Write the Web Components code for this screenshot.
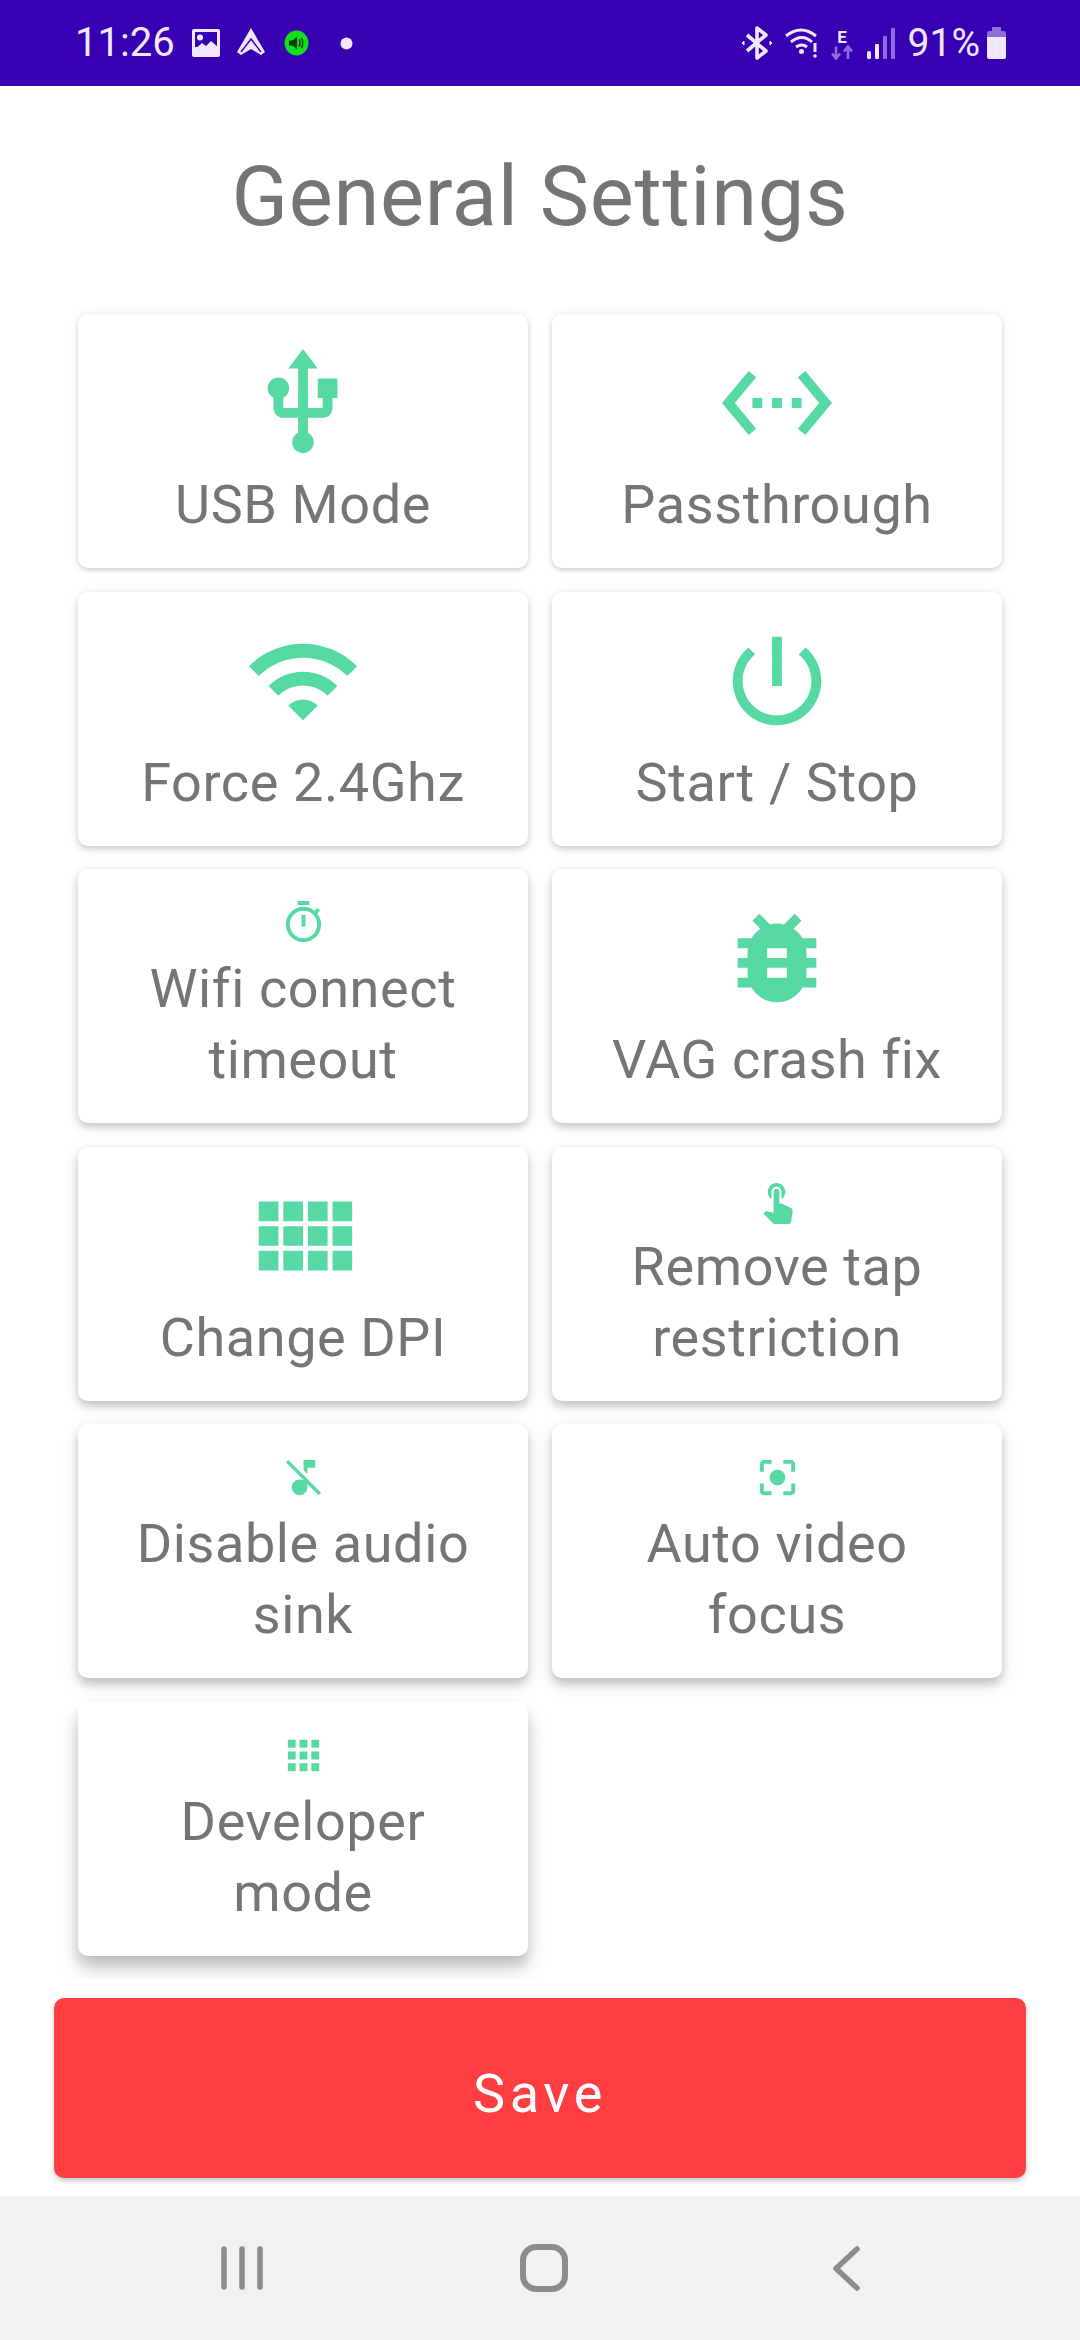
<!DOCTYPE html>
<html><head><meta charset="utf-8"><style>
html,body{margin:0;padding:0;background:#fff}
body{font-family:Roboto,"Noto Sans",sans-serif}
</style></head><body>
<settings-app>
<status-bar slot="status"></status-bar>
<page-title slot="title">General Settings</page-title>
<setting-card icon="usb" slot="cards" level="0">USB Mode</setting-card>
<setting-card icon="ethernet" slot="cards" level="0">Passthrough</setting-card>
<setting-card icon="wifi" slot="cards" level="1">Force 2.4Ghz</setting-card>
<setting-card icon="power" slot="cards" level="1">Start / Stop</setting-card>
<setting-card icon="timer" small slot="cards" level="2">Wifi connect timeout</setting-card>
<setting-card icon="bug" slot="cards" level="2">VAG crash fix</setting-card>
<setting-card icon="comfy" slot="cards" level="3">Change DPI</setting-card>
<setting-card icon="touch" small slot="cards" level="3">Remove tap restriction</setting-card>
<setting-card icon="musicoff" small slot="cards" level="4">Disable audio sink</setting-card>
<setting-card icon="focus" small slot="cards" level="4">Auto video focus</setting-card>
<setting-card icon="apps" small slot="cards" level="5">Developer mode</setting-card>
<save-button slot="save">Save</save-button>
<nav-bar slot="nav"></nav-bar>
</settings-app>
<script>
const ICONS={
usb:"M15 7v4h1v2h-3V5h2l-3-4-3 4h2v8H8v-2.07c.7-.37 1.2-1.08 1.2-1.93 0-1.21-.99-2.2-2.2-2.2-1.21 0-2.2.99-2.2 2.2 0 .85.5 1.56 1.2 1.93V13c0 1.11.89 2 2 2h3v3.05c-.71.37-1.2 1.1-1.2 1.95 0 1.22.99 2.2 2.2 2.2 1.21 0 2.2-.98 2.2-2.2 0-.85-.49-1.58-1.2-1.95V15h3c1.11 0 2-.89 2-2v-2h1V7h-4z",
ethernet:"M7.77 6.76L6.23 5.48.82 12l5.41 6.52 1.54-1.28L3.42 12l4.35-5.24zM7 13h2v-2H7v2zm10-2h-2v2h2v-2zm-6 2h2v-2h-2v2zm6.77-7.52l-1.54 1.28L20.58 12l-4.35 5.24 1.54 1.28L23.18 12l-5.41-6.52z",
wifi:"M1 9l2 2c4.97-4.97 13.03-4.97 18 0l2-2C16.93 2.93 7.08 2.93 1 9zm8 8l3 3 3-3c-1.65-1.66-4.34-1.66-6 0zm-4-4l2 2c2.76-2.76 7.24-2.76 10 0l2-2C15.14 9.14 8.87 9.14 5 13z",
power:"M13 3h-2v10h2V3zm4.83 2.17l-1.42 1.42C17.99 7.86 19 9.81 19 12c0 3.87-3.13 7-7 7s-7-3.13-7-7c0-2.19 1.01-4.14 2.58-5.42L6.17 5.17C4.23 6.82 3 9.26 3 12c0 4.97 4.03 9 9 9s9-4.03 9-9c0-2.74-1.23-5.18-3.17-6.83z",
timer:"M15 1H9v2h6V1zm-4 13h2V8h-2v6zm8.03-6.61l1.42-1.42c-.43-.51-.9-.99-1.41-1.41l-1.42 1.42C16.07 4.74 14.12 4 12 4c-4.97 0-9 4.03-9 9s4.02 9 9 9 9-4.03 9-9c0-2.12-.74-4.07-1.97-5.61zM12 20c-3.87 0-7-3.13-7-7s3.13-7 7-7 7 3.13 7 7-3.13 7-7 7z",
bug:"M20 8h-2.81c-.45-.78-1.07-1.45-1.82-1.96L17 4.41 15.59 3l-2.17 2.17C12.96 5.06 12.49 5 12 5c-.49 0-.96.06-1.41.17L8.41 3 7 4.41l1.62 1.63C7.88 6.55 7.26 7.22 6.81 8H4v2h2.09c-.05.33-.09.66-.09 1v1H4v2h2v1c0 .34.04.67.09 1H4v2h2.81c1.04 1.79 2.97 3 5.19 3s4.15-1.21 5.19-3H20v-2h-2.09c.05-.33.09-.66.09-1v-1h2v-2h-2v-1c0-.34-.04-.67-.09-1H20V8zm-6 8h-4v-2h4v2zm0-4h-4v-2h4v2z",
comfy:"M3 9h4V5H3v4zm0 5h4v-4H3v4zm5 0h4v-4H8v4zm5 0h4v-4h-4v4zM8 9h4V5H8v4zm5-4v4h4V5h-4zm5 9h4v-4h-4v4zM3 19h4v-4H3v4zm5 0h4v-4H8v4zm5 0h4v-4h-4v4zm5 0h4v-4h-4v4zm0-14v4h4V5h-4z",
touch:"M9 11.24V7.5C9 6.12 10.12 5 11.5 5S14 6.12 14 7.5v3.74c1.21-.81 2-2.18 2-3.74C16 5.01 13.99 3 11.5 3S7 5.01 7 7.5c0 1.56.79 2.93 2 3.74zm9.84 4.63l-4.54-2.26c-.17-.07-.35-.11-.54-.11H13v-6c0-.83-.67-1.5-1.5-1.5S10 6.67 10 7.5v10.74l-3.43-.72c-.08-.01-.15-.03-.24-.03-.31 0-.59.13-.79.33l-.79.8 4.94 4.94c.27.27.65.44 1.06.44h6.79c.75 0 1.33-.55 1.44-1.28l.75-5.27c.01-.07.02-.14.02-.2 0-.62-.38-1.16-.91-1.38z",
musicoff:"M4.27 3L3 4.27l9 9v.28c-.59-.34-1.27-.55-2-.55-2.21 0-4 1.79-4 4s1.79 4 4 4 4-1.79 4-4v-1.73L19.73 21 21 19.73 4.27 3zM14 7h4V3h-6v5.18l2 2z",
focus:"M12 8c-2.21 0-4 1.79-4 4s1.79 4 4 4 4-1.79 4-4-1.79-4-4-4zm-7 7H3v4c0 1.1.9 2 2 2h4v-2H5v-4zM5 5h4V3H5c-1.1 0-2 .9-2 2v4h2V5zm14-2h-4v2h4v4h2V5c0-1.1-.9-2-2-2zm0 16h-4v2h4c1.1 0 2-.9 2-2v-4h-2v4z",
apps:"M4 8h4V4H4v4zm6 12h4v-4h-4v4zm-6 0h4v-4H4v4zm0-6h4v-4H4v4zm6 0h4v-4h-4v4zm6-10v4h4V4h-4zm-6 4h4V4h-4v4zm6 6h4v-4h-4v4zm0 6h4v-4h-4v4z"
};
const SHADOWS=[
"0 2px 5px rgba(0,0,0,.16),0 0 12px rgba(0,0,0,.07)",
"0 3px 6px rgba(0,0,0,.17),0 1px 14px rgba(0,0,0,.07)",
"0 4px 8px rgba(0,0,0,.18),0 2px 16px rgba(0,0,0,.08)",
"0 5px 9px rgba(0,0,0,.18),0 4px 18px rgba(0,0,0,.09)",
"0 6px 10px rgba(0,0,0,.19),0 6px 20px rgba(0,0,0,.1)",
"0 9px 13px rgba(0,0,0,.17),0 14px 24px rgba(0,0,0,.13)"];
function def(name,html,setup){
  customElements.define(name,class extends HTMLElement{
    constructor(){super();this.attachShadow({mode:"open"}).innerHTML=html;}
    connectedCallback(){if(setup)setup(this,this.shadowRoot);}
  });
}
def("settings-app",`<style>
:host{display:flex;flex-direction:column;width:1080px;height:2340px;background:#fff;overflow:hidden}
.scroll{flex:1;min-height:0;overflow:hidden}
.grid{display:grid;grid-template-columns:450px 450px;grid-auto-rows:254px;column-gap:24px;row-gap:23.6px;padding:0 78px 40px}
.foot{padding:19px 54px 18px}
</style>
<slot name="status"></slot>
<div class="scroll"><slot name="title"></slot><div class="grid"><slot name="cards"></slot></div></div>
<div class="foot"><slot name="save"></slot></div>
<slot name="nav"></slot>`);
def("page-title",`<style>
:host{display:block;text-align:center;font:400 83px/100px Roboto,sans-serif;color:#757575;padding:61px 0 67px;height:100px;letter-spacing:.7px}
</style><slot></slot>`);
def("setting-card",`<style>
:host{display:block;box-sizing:border-box;height:254px;background:#fff;border-radius:10px;padding:30px 36px 0;text-align:center;color:#757575;font:400 54px/71px Roboto,sans-serif;letter-spacing:.6px}
svg{display:block;margin:0 auto 7px;width:118px;height:118px;fill:#57d9a3}
:host([small]) svg{width:47px;height:47px}
</style><svg viewBox="0 0 24 24"><path></path></svg><slot></slot>`,(el,r)=>{
  r.querySelector("path").setAttribute("d",ICONS[el.getAttribute("icon")]);
  el.style.boxShadow=SHADOWS[+el.getAttribute("level")||0];
});
def("save-button",`<style>
:host{display:flex;align-items:center;justify-content:center;box-sizing:border-box;height:180px;padding-top:12px;background:#ff3e41;border-radius:10px;color:#fff;font:400 54px/1 Roboto,sans-serif;letter-spacing:4.6px;box-shadow:0 3px 5px rgba(0,0,0,.22)}
</style><slot></slot>`);
def("nav-bar",`<style>
:host{display:flex;justify-content:center;height:144px;background:#f1f1f1}
svg{display:block}
</style><svg width="1080" height="144" viewBox="0 0 1080 144" fill="none" stroke="#8c8c8c" stroke-linecap="round" stroke-linejoin="round">
<path d="M224 53v38M242 53v38M260 53v38" stroke-width="5.5"/>
<rect x="523" y="51" width="42" height="42" rx="13" stroke-width="6"/>
<path d="M857 53L836 72.500 857 92" stroke-width="5.5"/>
</svg>`);
def("status-bar",`<style>
:host{display:flex;align-items:center;height:86px;background:#3700b3;color:#f0e8ff;font:400 39px/1 Roboto,sans-serif;box-sizing:border-box;padding:0 73px 0 75px}
.l,.r{display:flex;align-items:center}
.sp{flex:1}
svg{display:block;flex:none}
.t{font-size:40px}
</style>
<div class="l">
<span class="t">11:26</span>
<svg style="margin-left:16px" width="30" height="30" viewBox="0 0 30 30"><rect x="1" y="1" width="28" height="28" rx="2" fill="#f0e8ff"/><rect x="4" y="4" width="22" height="15" fill="#3700b3"/><circle cx="9" cy="9.500" r="3" fill="#f0e8ff"/><path d="M3 22l8-7 4 3 5-5 7 6v6H3z" fill="#f0e8ff"/></svg>
<svg style="margin-left:15px" width="30" height="30" viewBox="0 0 30 30"><path d="M15 0L29 24 25 27 15 21 5 27 1 24z" fill="#f0e8ff"/><path d="M5 24L15 11l10 13" fill="none" stroke="#3700b3" stroke-width="1.400"/></svg>
<svg style="margin-left:18px" width="25" height="26" viewBox="0 0 25 26"><ellipse cx="12.500" cy="13" rx="12" ry="12.500" fill="#11e11a"/><path d="M5 10.500h3.500L13 6.500v13l-4.500-4H5z" fill="#0b3b0b"/><path d="M15 9.500q2 3.500 0 7M17.500 8q2.500 5 0 10" stroke="#0b3b0b" stroke-width="1.500" fill="none"/></svg>
<svg style="margin-left:31px" width="13" height="13" viewBox="0 0 13 13"><circle cx="6.500" cy="6.500" r="6" fill="#f0e8ff"/></svg>
</div><div class="sp"></div>
<div class="r">
<svg width="30" height="34" viewBox="0 0 30 34" fill="none" stroke="#f0e8ff" stroke-width="3.600" stroke-linejoin="round"><path d="M5 9l19 16-9 7V2l9 7L5 25"/><path d="M2 15l-2 2 2 2zM28 15l2 2-2 2z" fill="#f0e8ff" stroke-width="1"/></svg>
<svg style="margin-left:12px" width="36" height="32" viewBox="0 0 36 32" fill="none" stroke="#f0e8ff" stroke-width="3"><path d="M2 9q15-12 30 0M7 15q11-9 21 0M12 20q6-4 11 0"/><circle cx="17.500" cy="24.500" r="2.500" fill="#f0e8ff" stroke="none"/><path d="M31 16v9" stroke-width="3"/><circle cx="31" cy="29" r="1.800" fill="#f0e8ff" stroke="none"/></svg>
<svg style="margin-left:10px" width="24" height="34" viewBox="0 0 24 34"><text x="12" y="16.500" text-anchor="middle" font-family="Roboto" font-weight="700" font-size="17" fill="#f0e8ff">E</text><path d="M6 20.500v12M2 27.500l4 5 4-5M18 33V20.500M14 25.500l4-5 4 5" stroke="#8d6fdc" stroke-width="2.600" fill="none"/></svg>
<svg style="margin-left:12px" width="29" height="32" viewBox="0 0 29 32"><rect x="1" y="24" width="4" height="8" rx="1.500" fill="#f0e8ff"/><rect x="9" y="17" width="4" height="15" rx="1" fill="#f0e8ff"/><rect x="17" y="9" width="4" height="23" rx="1" fill="#8d6fdc"/><rect x="25" y="1" width="4" height="31" rx="1" fill="#8d6fdc"/></svg>
<span style="margin-left:13px">91%</span>
<svg style="margin-left:6px" width="21" height="32" viewBox="0 0 21 32"><path d="M6 0h9v4H6z" fill="#8d6fdc"/><path d="M1 6q0-2 2-2h15q2 0 2 2v5H1z" fill="#8d6fdc"/><path d="M1 10h19v20q0 2-2 2H3q-2 0-2-2z" fill="#f0e8ff"/></svg>
</div>`);
</script>
</body></html>
